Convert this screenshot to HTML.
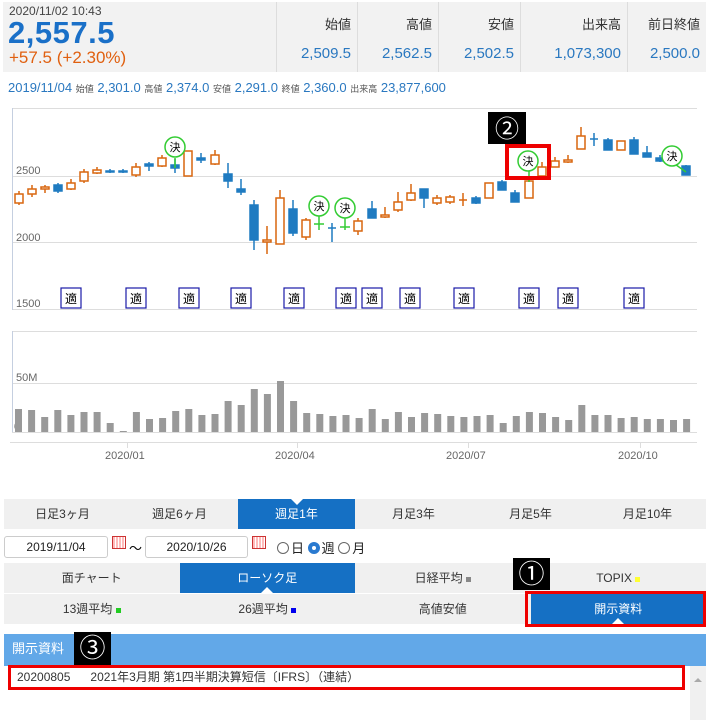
<!DOCTYPE html>
<html><head><meta charset="utf-8"><style>
*{margin:0;padding:0;box-sizing:border-box}
body{width:708px;height:720px;background:#fff;font-family:"Liberation Sans","Noto Sans CJK JP",sans-serif;position:relative;overflow:hidden}
.abs{position:absolute}
.hdr{left:3px;top:2px;width:703px;height:70px;background:#f2f2f2}
.col{position:absolute;top:0;height:70px;border-left:1px solid #ddd;text-align:right;padding-right:6px}
.col .l{font-size:13px;color:#333;margin-top:12px}
.col .v{font-size:15px;color:#2a78c0;margin-top:12px}
.tabrow{position:absolute;left:4px;width:702px;background:#f0f0f0;display:flex}
.tabrow div{flex:1;text-align:center;font-size:12px;color:#333;position:relative}
.tabrow .on{background:#1570c4;color:#fff}
.blk{position:absolute;background:#000;color:#fff;font-size:26px;text-align:center}
.inp{position:absolute;top:536px;height:22px;border:1px solid #ccc;border-radius:3px;font-size:12px;text-align:center;line-height:20px;color:#222;background:#fff}
.cal{position:absolute;top:536px;width:14px;height:13px;border:1px solid #c33;background:repeating-linear-gradient(90deg,#fbb 0 2px,#fff 2px 3px)}
.rad{display:inline-block;width:12px;height:12px;border:1px solid #666;border-radius:50%;vertical-align:-1px;margin-right:2px}
</style></head><body>
<div class="abs hdr">
 <div class="abs" style="left:6px;top:2px;font-size:12px;color:#444">2020/11/02 10:43</div>
 <div class="abs" style="left:5px;top:13px;font-size:31px;font-weight:bold;color:#1a70c8;letter-spacing:0.5px">2,557.5</div>
 <div class="abs" style="left:6px;top:46px;font-size:17px;color:#e06010">+57.5 (+2.30%)</div>
 <div class="col" style="left:273px;width:81px"><div class="l">始値</div><div class="v">2,509.5</div></div>
 <div class="col" style="left:354px;width:81px"><div class="l">高値</div><div class="v">2,562.5</div></div>
 <div class="col" style="left:435px;width:82px"><div class="l">安値</div><div class="v">2,502.5</div></div>
 <div class="col" style="left:517px;width:107px"><div class="l">出来高</div><div class="v">1,073,300</div></div>
 <div class="col" style="left:624px;width:79px"><div class="l">前日終値</div><div class="v">2,500.0</div></div>
</div>
<div class="abs" style="left:8px;top:80px;font-size:13px;color:#2a78c0;white-space:nowrap">2019/11/04 <span style="font-size:9px;color:#555">始値</span> 2,301.0 <span style="font-size:9px;color:#555">高値</span> 2,374.0 <span style="font-size:9px;color:#555">安値</span> 2,291.0 <span style="font-size:9px;color:#555">終値</span> 2,360.0 <span style="font-size:9px;color:#555">出来高</span> 23,877,600</div>

<svg class="abs" style="left:0;top:0" width="708" height="500">
<g stroke="#ddd" stroke-width="1"><line x1="12" y1="108.5" x2="697" y2="108.5"/><line x1="12" y1="176.5" x2="697" y2="176.5"/><line x1="12" y1="242.5" x2="697" y2="242.5"/><line x1="12" y1="309.5" x2="697" y2="309.5"/>
<line x1="12" y1="331.5" x2="697" y2="331.5"/><line x1="12" y1="383.5" x2="697" y2="383.5"/><line x1="12" y1="432.5" x2="697" y2="432.5"/><line x1="10" y1="442.5" x2="697" y2="442.5"/>
<line x1="127.5" y1="442" x2="127.5" y2="448"/><line x1="297.5" y1="442" x2="297.5" y2="448"/><line x1="468.5" y1="442" x2="468.5" y2="448"/><line x1="640.5" y1="442" x2="640.5" y2="448"/></g>
<line x1="12.5" y1="108" x2="12.5" y2="310" stroke="#c5cfe0"/><line x1="12.5" y1="331" x2="12.5" y2="432" stroke="#c5cfe0"/>
<g font-size="11" fill="#666"><text x="16" y="174">2500</text><text x="16" y="241">2000</text><text x="16" y="307">1500</text><text x="16" y="381">50M</text><text x="14" y="430">0</text>
<text x="105" y="459">2020/01</text><text x="275" y="459">2020/04</text><text x="446" y="459">2020/07</text><text x="618" y="459">2020/10</text></g>
<g stroke-width="1.5">
<g stroke="#d9660f" fill="#fff">
<path d="M19 191V205M32 185V197M45 185V193M71 179V190M84 169V183M97 167V174M136 163V177M162 155V167M188 151V176M215 150V165M267 226V254M280 190V244M306 218V240M358 218V235M385 207V218M398 192V212M411 184V201M437 195V205M450 195V204M463 193V206M489 183V198M529 178V198M542 162V176M555 157V167M568 155V163M581 127V149M621 141V150"/>
<rect x="15" y="194" width="8" height="9"/><rect x="28" y="189" width="8" height="5"/><rect x="41" y="187" width="8" height="2"/><rect x="67" y="183" width="8" height="6"/><rect x="80" y="172" width="8" height="9"/><rect x="93" y="170" width="8" height="3"/><rect x="132" y="167" width="8" height="8"/><rect x="158" y="158" width="8" height="8"/><rect x="184" y="151" width="8" height="25"/><rect x="211" y="155" width="8" height="9"/><rect x="263" y="240" width="8" height="2"/><rect x="276" y="198" width="8" height="46"/><rect x="302" y="220" width="8" height="17"/><rect x="354" y="221" width="8" height="10"/><rect x="381" y="215" width="8" height="2"/><rect x="394" y="202" width="8" height="8"/><rect x="407" y="193" width="8" height="7"/><rect x="433" y="198" width="8" height="5"/><rect x="446" y="197" width="8" height="5"/><path d="M459 200H467"/><rect x="485" y="183" width="8" height="15"/><rect x="525" y="181" width="8" height="17"/><rect x="538" y="167" width="8" height="9"/><rect x="551" y="161" width="8" height="6"/><rect x="564" y="160" width="8" height="2"/><rect x="577" y="136" width="8" height="13"/><rect x="617" y="141" width="8" height="9"/>
</g>
<g stroke="#1f7bc1" fill="#1f7bc1">
<path d="M58 183V193M110 169V173M123 169V173M149 162V171M175 159V173M201 153V163M228 163V188M241 179V195M254 200V250M293 200V236M332 223V242M372 201V218M424 189V208M476 196V204M502 180V190M515 190V202M594 133V146M608 138V150M634 137V154M647 146V157M660 155V162M686 165V175"/>
<rect x="54" y="185" width="8" height="6"/><rect x="106" y="171" width="8" height="1"/><rect x="119" y="171" width="8" height="1"/><rect x="145" y="164" width="8" height="2"/><rect x="171" y="165" width="8" height="3"/><rect x="197" y="158" width="8" height="2"/><rect x="224" y="174" width="8" height="7"/><rect x="237" y="189" width="8" height="3"/><rect x="250" y="205" width="8" height="35"/><rect x="289" y="209" width="8" height="24"/><path d="M328 228H336"/><rect x="368" y="209" width="8" height="9"/><rect x="420" y="189" width="8" height="9"/><rect x="472" y="198" width="8" height="5"/><rect x="498" y="182" width="8" height="8"/><rect x="511" y="193" width="8" height="9"/><path d="M590 139H598"/><rect x="604" y="140" width="8" height="10"/><rect x="630" y="140" width="8" height="14"/><rect x="643" y="153" width="8" height="4"/><rect x="656" y="158" width="8" height="3"/><rect x="682" y="166" width="8" height="9"/>
</g>
<g stroke="#3c3" fill="#fff"><path d="M175 158V168M319 215V230M345 218V230M314 224H324M340 227H350M529 170V182M672 162L686 172"/>
<circle cx="175" cy="147" r="10"/><circle cx="319" cy="206" r="10"/><circle cx="345" cy="208" r="10"/><circle cx="528" cy="161" r="10"/><circle cx="672" cy="156" r="10"/></g>
</g>
<g font-size="11" fill="#000" text-anchor="middle"><text x="175" y="151">決</text><text x="319" y="210">決</text><text x="345" y="212">決</text><text x="528" y="165">決</text><text x="672" y="160">決</text></g>
<g stroke="#1a1aa8" fill="#fff" stroke-width="1.2">
<rect x="61" y="288" width="20" height="20"/><rect x="126" y="288" width="20" height="20"/><rect x="179" y="288" width="20" height="20"/><rect x="231" y="288" width="20" height="20"/><rect x="284" y="288" width="20" height="20"/><rect x="336" y="288" width="20" height="20"/><rect x="362" y="288" width="20" height="20"/><rect x="400" y="288" width="20" height="20"/><rect x="454" y="288" width="20" height="20"/><rect x="519" y="288" width="20" height="20"/><rect x="558" y="288" width="20" height="20"/><rect x="624" y="288" width="20" height="20"/></g>
<g font-size="12" fill="#000" text-anchor="middle"><text x="71" y="303">適</text><text x="136" y="303">適</text><text x="189" y="303">適</text><text x="241" y="303">適</text><text x="294" y="303">適</text><text x="346" y="303">適</text><text x="372" y="303">適</text><text x="410" y="303">適</text><text x="464" y="303">適</text><text x="529" y="303">適</text><text x="568" y="303">適</text><text x="634" y="303">適</text></g>
<rect x="488" y="112" width="38" height="32" fill="#000"/><text x="507" y="137" font-size="24" fill="#fff" text-anchor="middle">②</text>
<rect x="507" y="146" width="42" height="32" fill="none" stroke="#e00" stroke-width="4"/>
</svg>
<svg class="abs" style="left:0;top:0" width="708" height="440" id="vs"></svg>
<script>
var t=[409,410,417,410,415,412,412,423,431,412,419,418,411,409,415,414,401,405,389,394,381,401,413,414,416,415,418,409,419,412,417,413,414,416,417,416,415,423,416,412,413,417,420,405,415,415,418,417,419,419,420,419];
var s='';for(var i=0;i<t.length;i++){var x=15+i*13.1;s+='<rect x="'+x.toFixed(1)+'" y="'+t[i]+'" width="7" height="'+(432-t[i])+'" fill="#999"/>';}
document.getElementById('vs').innerHTML=s;
</script>

<div class="tabrow" style="top:499px;height:30px;line-height:30px"><div>日足3ヶ月</div><div>週足6ヶ月</div><div class="on">週足1年<span class="abs" style="left:50%;top:0;margin-left:-6px;border:6px solid transparent;border-top-color:#fff"></span></div><div>月足3年</div><div>月足5年</div><div>月足10年</div></div>
<div class="inp" style="left:4px;width:104px">2019/11/04</div><div class="cal" style="left:112px"></div>
<div class="abs" style="left:129px;top:538px;font-size:13px">～</div>
<div class="inp" style="left:145px;width:103px">2020/10/26</div><div class="cal" style="left:252px"></div>
<div class="abs" style="left:277px;top:538px;font-size:13px;color:#222"><span class="rad"></span>日 <span class="rad" style="border:4px solid #2a7ad0"></span>週 <span class="rad"></span>月</div>
<div class="tabrow" style="top:563px;height:30px;line-height:30px"><div>面チャート</div><div class="on">ローソク足<span class="abs" style="left:50%;bottom:0;margin-left:-6px;border:6px solid transparent;border-bottom-color:#fff"></span></div><div>日経平均 <span style="display:inline-block;width:5px;height:5px;background:#888"></span></div><div>TOPIX <span style="display:inline-block;width:5px;height:5px;background:#ff3"></span></div></div>
<div class="tabrow" style="top:594px;height:30px;line-height:30px"><div>13週平均 <span style="display:inline-block;width:5px;height:5px;background:#2c2"></span></div><div>26週平均 <span style="display:inline-block;width:5px;height:5px;background:#00e"></span></div><div>高値安値</div><div class="on">開示資料<span class="abs" style="left:50%;bottom:0;margin-left:-6px;border:6px solid transparent;border-bottom-color:#fff"></span></div></div>
<div class="abs" style="left:525px;top:591px;width:181px;height:36px;border:3px solid #e00"></div>
<div class="blk" style="left:513px;top:558px;width:37px;height:32px;line-height:32px">①</div>
<div class="abs" style="left:4px;top:634px;width:702px;height:32px;background:#62a8e8;color:#fff;font-size:13px;line-height:30px;padding-left:8px">開示資料</div>
<div class="blk" style="left:74px;top:632px;width:37px;height:33px;line-height:33px">③</div>
<div class="abs" style="left:690px;top:666px;width:16px;height:54px;background:#f0f0f0"><span class="abs" style="left:4px;top:8px;border:4px solid transparent;border-bottom-color:#aaa"></span></div>
<div class="abs" style="left:8px;top:665px;width:677px;height:25px;border:3px solid #e00;font-size:12px;color:#333;line-height:19px;padding-left:6px;white-space:pre">20200805      2021年3月期 第1四半期決算短信〔IFRS〕（連結）</div>
</body></html>
